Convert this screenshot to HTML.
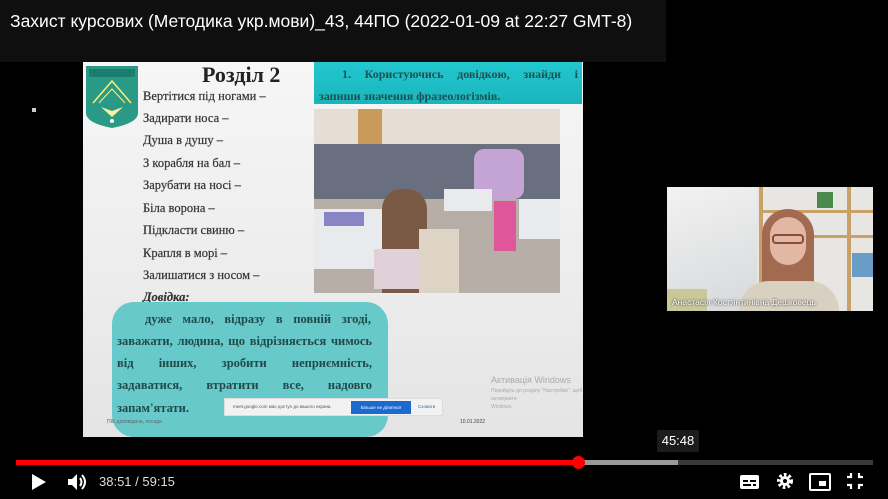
<!DOCTYPE html>
<html><head><meta charset="utf-8"><style>
*{margin:0;padding:0;box-sizing:border-box}
body{width:888px;height:499px;background:#000;position:relative;overflow:hidden;font-family:"Liberation Sans",sans-serif}
.abs{position:absolute}
#top{left:0;top:0;width:666px;height:62px;background:#0f0f0f}
#title{left:10px;top:11px;color:#fff;font-size:17.5px;white-space:nowrap}
#slide{left:83px;top:62px;width:500px;height:375px;background:linear-gradient(#f6f6f6,#ececec 60%,#e4e4e4)}
.s{font-family:"Liberation Serif",serif;color:#333;font-weight:bold}
.li{position:absolute;left:60px;font-size:12.5px;color:#333;font-family:"Liberation Serif",serif;-webkit-text-stroke:0.2px #333}
#head{left:231px;top:0;width:268px;height:42px;background:linear-gradient(#22c7cf,#1ab5bd);}
#box{left:29px;top:240px;width:276px;height:135px;background:#67c9c9;border-radius:22px}
.bt{position:absolute;left:0;width:265px;font-family:"Liberation Serif",serif;font-weight:bold;color:#214a4a;font-size:12.5px;text-align:justify;text-align-last:justify;white-space:nowrap}
.ctrl{fill:#fff}
</style></head><body>
<div id="top" class="abs"></div>
<div id="title" class="abs">Захист курсових (Методика укр.мови)_43, 44ПО (2022-01-09 at 22:27 GMT-8)</div>
<div class="abs" style="left:32px;top:108px;width:4px;height:4px;background:#ccc"></div>

<div id="slide" class="abs">
  <svg class="abs" style="left:2px;top:3px" width="54" height="64" viewBox="0 0 54 64">
    <path d="M1 1H53V48Q53 58 27 63Q1 58 1 48Z" fill="#2a9a86"/>
    <rect x="4" y="4" width="46" height="8" fill="#1b7e6d"/>
    <path d="M8 38L27 16L46 38" fill="none" stroke="#ffef7a" stroke-width="1.5"/>
    <path d="M14 38L27 24L40 38" fill="none" stroke="#ffef7a" stroke-width="1"/>
    <path d="M16 42L27 52L38 42L27 46Z" fill="#f6f0a0"/>
    <circle cx="27" cy="56" r="2" fill="#fff"/>
  </svg>
  <div class="abs s" style="left:119px;top:0px;font-size:22px;color:#222">Розділ 2</div>
  <div id="head" class="abs"><div class="abs s" style="left:28px;top:5px;font-size:12px;color:#1f5050;width:236px;text-align:justify;text-align-last:justify;white-space:nowrap">1. Користуючись довідкою, знайди і</div><div class="abs s" style="left:5px;top:27px;font-size:12px;color:#1f5050">запиши значення фразеологізмів.</div></div>
  <div class="li" style="top:27px">Вертітися під ногами –</div>
  <div class="li" style="top:49px">Задирати носа –</div>
  <div class="li" style="top:71px">Душа в душу –</div>
  <div class="li" style="top:94px">З корабля на бал –</div>
  <div class="li" style="top:116px">Зарубати на носі –</div>
  <div class="li" style="top:139px">Біла ворона –</div>
  <div class="li" style="top:161px">Підкласти свиню –</div>
  <div class="li" style="top:184px">Крапля в морі –</div>
  <div class="li" style="top:206px">Залишатися з носом –</div>
  <div class="li" style="top:228px;font-weight:bold;font-style:italic">Довідка:</div>
  <div class="abs" style="left:231px;top:47px;width:246px;height:184px;background:#d8cfc6;overflow:hidden">
    <div class="abs" style="left:0;top:0;width:246px;height:60px;background:#e6ddd5"></div>
    <div class="abs" style="left:44px;top:0;width:24px;height:50px;background:#c99a5a"></div>
    <div class="abs" style="left:0;top:35px;width:246px;height:60px;background:#6a6f80"></div>
    <div class="abs" style="left:0;top:90px;width:246px;height:94px;background:#b8aea8"></div>
    <div class="abs" style="left:0;top:100px;width:80px;height:60px;background:#e8eaee"></div>
    <div class="abs" style="left:10px;top:103px;width:40px;height:14px;background:#8a84c4"></div>
    <div class="abs" style="left:68px;top:80px;width:45px;height:104px;background:#7a5a45;border-radius:20px 20px 0 0"></div>
    <div class="abs" style="left:105px;top:120px;width:40px;height:64px;background:#ddd4c6"></div>
    <div class="abs" style="left:60px;top:140px;width:45px;height:40px;background:#e0d0d8"></div>
    <div class="abs" style="left:160px;top:40px;width:50px;height:50px;background:#c4a4d4;border-radius:10px"></div>
    <div class="abs" style="left:180px;top:92px;width:22px;height:50px;background:#e0569a"></div>
    <div class="abs" style="left:130px;top:80px;width:48px;height:22px;background:#e8eaee"></div>
    <div class="abs" style="left:205px;top:90px;width:41px;height:40px;background:#e8eaee"></div>
  </div>
  <div id="box" class="abs">
    <div class="bt" style="left:33px;width:226px;top:10px">дуже мало, відразу в повній згоді,</div>
    <div class="bt" style="left:5px;width:255px;top:32px">заважати, людина, що відрізняється чимось</div>
    <div class="bt" style="left:5px;width:255px;top:54px">від інших, зробити неприємність,</div>
    <div class="bt" style="left:5px;width:255px;top:76px">задаватися, втратити все, надовго</div>
    <div class="bt" style="left:5px;width:80px;text-align-last:left;top:99px">запам'ятати.</div>
  </div>
  <div class="abs" style="left:24px;top:357px;font-size:5px;color:#666">ПІБ доповідача, посада</div>
  <div class="abs" style="left:377px;top:357px;font-size:5px;color:#444">10.01.2022</div>
  <div class="abs" style="left:408px;top:313px;font-size:9px;color:#aaa">Активація Windows</div>
  <div class="abs" style="left:408px;top:325px;font-size:5px;color:#aaa;line-height:8px">Перейдіть до розділу "Настройки", щоб активувати<br>Windows.</div>
  <div class="abs" style="left:141px;top:336px;width:219px;height:18px;background:#f2f2f2;border:1px solid #ddd">
    <div class="abs" style="left:8px;top:5px;font-size:4.5px;color:#555">meet.google.com має доступ до вашого екрана.</div>
    <div class="abs" style="left:126px;top:2px;width:60px;height:13px;background:#1a6ad0;color:#fff;font-size:4.5px;text-align:center;line-height:13px">Більше не ділитися</div>
    <div class="abs" style="left:193px;top:5px;font-size:4.5px;color:#1a6ad0">Сховати</div>
  </div>
</div>

<div class="abs" style="left:667px;top:187px;width:206px;height:124px;background:#e8e6e2;overflow:hidden">
  <div class="abs" style="left:0;top:0;width:90px;height:124px;background:linear-gradient(160deg,#f2f2f2,#d6d8da)"></div>
  <div class="abs" style="left:92px;top:0;width:4px;height:124px;background:#c9a066"></div>
  <div class="abs" style="left:180px;top:0;width:4px;height:124px;background:#c9a066"></div>
  <div class="abs" style="left:96px;top:23px;width:110px;height:3px;background:#c9a066"></div>
  <div class="abs" style="left:140px;top:48px;width:66px;height:3px;background:#c9a066"></div>
  <div class="abs" style="left:185px;top:66px;width:21px;height:24px;background:#6a9cc8"></div>
  <div class="abs" style="left:150px;top:5px;width:16px;height:16px;background:#4a8a4a"></div>
  <div class="abs" style="left:0;top:102px;width:40px;height:22px;background:#c8c89a"></div>
  <div class="abs" style="left:95px;top:22px;width:52px;height:80px;background:#a26a50;border-radius:26px 26px 6px 6px"></div>
  <div class="abs" style="left:103px;top:30px;width:36px;height:48px;background:#e2b8a4;border-radius:18px"></div>
  <div class="abs" style="left:105px;top:47px;width:32px;height:10px;border:2px solid #8a4a3a;border-radius:4px"></div>
  <div class="abs" style="left:72px;top:94px;width:100px;height:30px;background:#d8d0c0;border-radius:30px 30px 0 0"></div>
  <div class="abs" style="left:5px;top:110px;font-size:8.5px;color:#fff;white-space:nowrap;text-shadow:0 0 2px #000">Анастасія Костянтинівна Дешковець</div>
</div>

<div class="abs" style="left:657px;top:430px;width:42px;height:22px;background:#1c1c1c;border-radius:2px;color:#fff;font-size:13px;text-align:center;line-height:22px">45:48</div>
<div class="abs" style="left:16px;top:460px;width:857px;height:5px;background:#3a3a3a"></div>
<div class="abs" style="left:16px;top:460px;width:662px;height:5px;background:#9a9a9a"></div>
<div class="abs" style="left:16px;top:460px;width:562px;height:5px;background:#f00"></div>
<div class="abs" style="left:572px;top:456px;width:13px;height:13px;background:#f00;border-radius:50%"></div>
<svg class="abs" style="left:28px;top:472px" width="20" height="20"><path d="M4 2L18 10L4 18Z" class="ctrl"/></svg>
<svg class="abs" style="left:66px;top:472px" width="22" height="20"><path d="M2 7H6L11 2V18L6 13H2Z" class="ctrl"/><path d="M14 6Q17 10 14 14" stroke="#fff" stroke-width="2" fill="none"/><path d="M16 3Q22 10 16 17" stroke="#fff" stroke-width="2" fill="none"/></svg>
<div class="abs" style="left:99px;top:474px;color:#ddd;font-size:13px">38:51 / 59:15</div>
<svg class="abs" style="left:738px;top:472px" width="24" height="20"><rect x="2" y="3" width="19" height="14" rx="2" fill="#fff"/><rect x="5" y="8" width="5" height="2" fill="#000"/><rect x="12" y="8" width="6" height="2" fill="#000"/><rect x="5" y="12" width="8" height="2" fill="#000"/><rect x="15" y="12" width="3" height="2" fill="#000"/></svg>
<svg class="abs" style="left:775px;top:471px" width="20" height="20"><circle cx="10" cy="10" r="6" fill="none" stroke="#fff" stroke-width="4" stroke-dasharray="2.5 2"/><circle cx="10" cy="10" r="5" fill="#fff"/><circle cx="10" cy="10" r="2" fill="#000"/></svg>
<svg class="abs" style="left:808px;top:471px" width="24" height="22"><rect x="2" y="3" width="20" height="16" rx="1" fill="none" stroke="#fff" stroke-width="2"/><rect x="11" y="10" width="7" height="5" fill="#fff"/></svg>
<svg class="abs" style="left:845px;top:471px" width="20" height="20"><path d="M6 2V6H2M14 2V6H18M6 18V14H2M14 18V14H18" stroke="#fff" stroke-width="2.2" fill="none"/></svg>
</body></html>
